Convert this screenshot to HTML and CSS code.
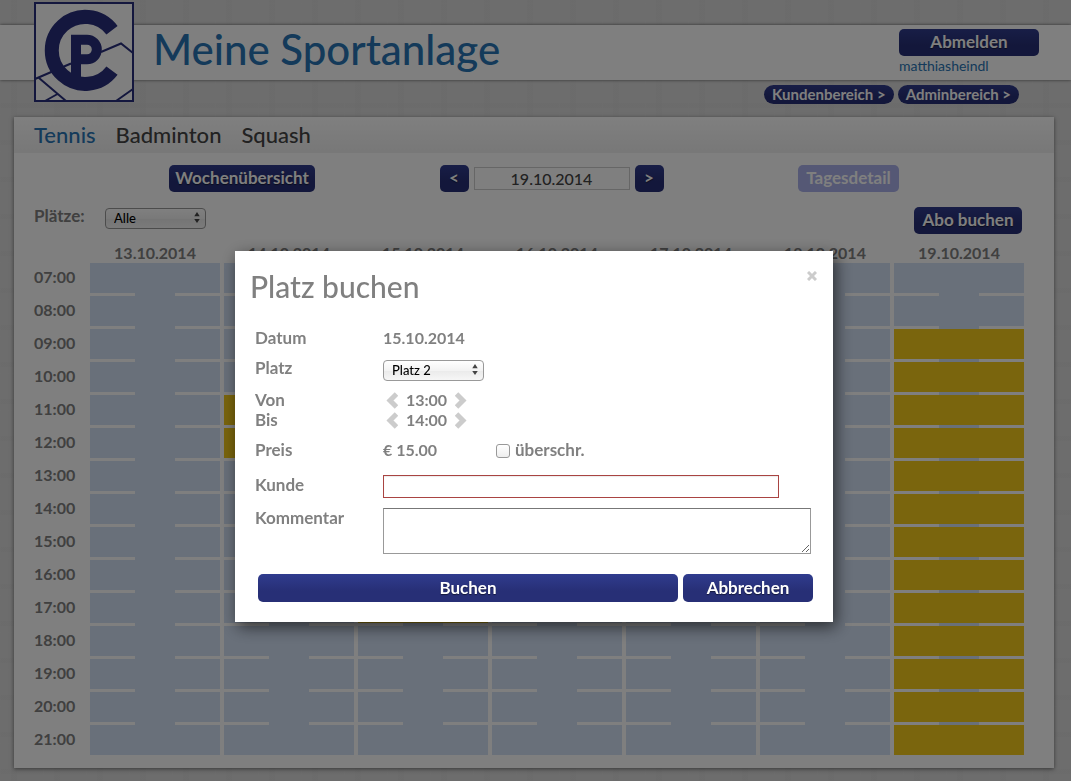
FILE: index.html
```html
<!DOCTYPE html>
<html lang="de">
<head>
<meta charset="utf-8">
<title>Meine Sportanlage</title>
<link rel="stylesheet" href="styles.css">
</head>
<body>
<header class="topbar">
  <svg class="logo" viewBox="0 0 100 100" role="img" aria-label="CP">
    <rect class="logo-frame" x="1" y="1" width="98" height="98"/>
    <path class="logo-line" d="M1 77L37 61.500M67 50L87 41.500L99 51M5 76L32 99M11 99L23.500 92M82 99L99 87"/>
    <path class="logo-ring" d="M78 28.200A33.500 33.500 0 1 0 78 68.600"/>
    <path class="logo-mark" d="M42 78V37.700H53A9.800 9.800 0 0 1 53 57.300H42"/>
  </svg>
  <h1 class="title">Meine Sportanlage</h1>
  <div class="user">
    <button class="btn" type="button">Abmelden</button>
    <a class="user-link" href="#">matthiasheindl</a>
  </div>
</header>
<nav class="areas">
  <a class="pill" href="#">Kundenbereich &gt;</a>
  <a class="pill" href="#">Adminbereich &gt;</a>
</nav>
<main class="panel">
  <nav class="tabs">
    <a class="tab active" href="#">Tennis</a>
    <a class="tab" href="#">Badminton</a>
    <a class="tab" href="#">Squash</a>
  </nav>
  <div class="toolbar">
    <button class="btn week" type="button">Wochenübersicht</button>
    <div class="datepick">
      <button class="btn step" type="button">&lt;</button>
      <input class="date" type="text" value="19.10.2014" aria-label="Datum">
      <button class="btn step" type="button">&gt;</button>
    </div>
    <button class="btn day" type="button" disabled>Tagesdetail</button>
  </div>
  <div class="filter">
    <label class="filter-label" for="courts">Plätze:</label>
    <span class="select"><select id="courts"><option>Alle</option></select><svg class="arrows" viewBox="0 0 6 12"><path d="M3 0L6 4.500H0ZM3 12L0 7.500H6Z"/></svg></span>
    <button class="btn abo" type="button">Abo buchen</button>
  </div>
  <table class="week-table">
    <thead>
      <tr><td class="corner"></td><th>13.10.2014</th><th>14.10.2014</th><th>15.10.2014</th><th>16.10.2014</th><th>17.10.2014</th><th>18.10.2014</th><th>19.10.2014</th></tr>
    </thead>
    <tbody>
      <tr><th>07:00</th><td></td><td></td><td></td><td></td><td></td><td></td><td></td></tr>
      <tr><th>08:00</th><td></td><td></td><td></td><td></td><td></td><td></td><td></td></tr>
      <tr><th>09:00</th><td></td><td></td><td></td><td></td><td></td><td></td><td class="busy"></td></tr>
      <tr><th>10:00</th><td></td><td></td><td></td><td></td><td></td><td></td><td class="busy"></td></tr>
      <tr><th>11:00</th><td></td><td class="busy"></td><td></td><td></td><td></td><td></td><td class="busy"></td></tr>
      <tr><th>12:00</th><td></td><td class="busy"></td><td></td><td></td><td></td><td></td><td class="busy"></td></tr>
      <tr><th>13:00</th><td></td><td></td><td></td><td></td><td></td><td></td><td class="busy"></td></tr>
      <tr><th>14:00</th><td></td><td></td><td></td><td></td><td></td><td></td><td class="busy"></td></tr>
      <tr><th>15:00</th><td></td><td></td><td></td><td></td><td></td><td></td><td class="busy"></td></tr>
      <tr><th>16:00</th><td></td><td></td><td></td><td></td><td></td><td></td><td class="busy"></td></tr>
      <tr><th>17:00</th><td></td><td></td><td class="busy"></td><td></td><td></td><td></td><td class="busy"></td></tr>
      <tr><th>18:00</th><td></td><td></td><td></td><td></td><td></td><td></td><td class="busy"></td></tr>
      <tr><th>19:00</th><td></td><td></td><td></td><td></td><td></td><td></td><td class="busy"></td></tr>
      <tr><th>20:00</th><td></td><td></td><td></td><td></td><td></td><td></td><td class="busy"></td></tr>
      <tr><th>21:00</th><td></td><td></td><td></td><td></td><td></td><td></td><td class="busy"></td></tr>
    </tbody>
  </table>
</main>
<div class="overlay">
  <form class="dialog" role="dialog" aria-labelledby="dialog-title">
    <div class="dialog-head">
      <h2 class="dialog-title" id="dialog-title">Platz buchen</h2>
      <button class="close" type="button" aria-label="Schließen"><svg viewBox="0 0 10 10"><path d="M1 1L9 9M9 1L1 9"/></svg></button>
    </div>
    <div class="row"><span class="label">Datum</span><span>15.10.2014</span></div>
    <div class="row"><label class="label" for="court">Platz</label><span class="select light"><select id="court"><option>Platz 2</option></select><svg class="arrows" viewBox="0 0 6 12"><path d="M3 0L6 4.500H0ZM3 12L0 7.500H6Z"/></svg></span></div>
    <div class="row"><span class="label">Von</span><span class="stepper"><button class="chev" type="button" aria-label="früher"><svg viewBox="0 0 12 17"><path d="M10.500 2L4 8.500L10.500 15"/></svg></button><span class="time">13:00</span><button class="chev" type="button" aria-label="später"><svg viewBox="0 0 12 17"><path d="M1.500 2L8 8.500L1.500 15"/></svg></button></span></div>
    <div class="row tight"><span class="label">Bis</span><span class="stepper"><button class="chev" type="button" aria-label="früher"><svg viewBox="0 0 12 17"><path d="M10.500 2L4 8.500L10.500 15"/></svg></button><span class="time">14:00</span><button class="chev" type="button" aria-label="später"><svg viewBox="0 0 12 17"><path d="M1.500 2L8 8.500L1.500 15"/></svg></button></span></div>
    <div class="row"><span class="label">Preis</span><span class="price">€ 15.00</span><input class="check" type="checkbox" id="override"><label class="check-label" for="override">überschr.</label></div>
    <div class="row customer"><label class="label" for="customer">Kunde</label><input class="field" type="text" id="customer"></div>
    <div class="row"><label class="label" for="comment">Kommentar</label><textarea class="area" id="comment"></textarea></div>
    <div class="actions">
      <button class="btn book" type="button">Buchen</button>
      <button class="btn cancel" type="button">Abbrechen</button>
    </div>
  </form>
</div>
</body>
</html>
```
FILE: styles.css
```css
* { box-sizing: border-box; }

body {
  margin: 0;
  padding-top: 25px;
  min-height: 100vh;
  font: 16px/20px Lato, "Open Sans", sans-serif;
  color: #555;
  background:
    repeating-linear-gradient(90deg, rgba(255,255,255,.04) 0 1px, transparent 1px 11px, rgba(0,0,0,.01) 11px 17px, transparent 17px 43px),
    repeating-linear-gradient(0deg, rgba(255,255,255,.04) 0 1px, transparent 1px 7px, rgba(0,0,0,.01) 7px 12px, transparent 12px 37px),
    #dadada;
}

a { text-decoration: none; }
button, input, select, textarea { font: inherit; margin: 0; }

.topbar {
  display: flex;
  align-items: flex-start;
  height: 55px;
  padding: 0 32px 0 34px;
  background: #fff;
  box-shadow: 0 0 3px rgba(0,0,0,.6);
}

.logo { flex: none; width: 100px; height: 100px; margin: -23px 19px -22px 0; fill: none; stroke: #292f7c; }
.logo-frame { fill: #fff; stroke-width: 2; }
.logo-line { stroke-width: 2; }
.logo-ring { stroke-width: 14; }
.logo-mark { stroke-width: 10; }

.title { margin: 0; font-size: 42px; line-height: 48px; font-weight: 500; color: #2874b4; }

.user { width: 140px; margin-left: auto; padding-top: 4px; display: flex; flex-direction: column; }
.user-link { font-size: 14px; line-height: 20px; color: #2874b4; }

.btn {
  height: 27px;
  padding: 0 0 1px;
  border: 0;
  border-radius: 5px;
  font-size: 17px;
  font-weight: 700;
  color: #fff;
  text-shadow: 0 1px 1px rgba(0,0,0,.5);
  background: linear-gradient(#303c8e, #272f76 60%);
}

.areas { display: flex; justify-content: flex-end; gap: 4px; padding: 5px 52px 0 0; }
.pill {
  padding: 0 8px;
  border-radius: 10px;
  font-size: 15px;
  line-height: 19px;
  font-weight: 700;
  color: #fff;
  background: linear-gradient(#303c8e, #272f76 60%);
}

.panel { margin: 13px 17px 13px 14px; padding-bottom: 13px; background: #fff; box-shadow: 0 1px 4px rgba(0,0,0,.5); }

.tabs { display: flex; gap: 20px; height: 36px; padding-left: 20px; background: linear-gradient(#fff, #f0f0f0); }
.tab { font-size: 22px; line-height: 36px; font-weight: 500; color: #444; }
.tab.active { color: #2874b4; }

.toolbar { display: flex; justify-content: space-between; align-items: center; padding: 12px 155px 0; }
.week { width: 146px; }
.day { width: 101px; background: #aab0ea; text-shadow: none; }
.datepick { display: flex; align-items: center; gap: 5px; margin-right: 10px; }
.step { width: 29px; }
.date { width: 156px; height: 23px; padding: 0; border: 1px solid #ccc; text-align: center; font-weight: 500; color: #444; background: #fff; }

.filter { display: flex; align-items: flex-start; padding: 15px 32px 9px 20px; }
.filter-label { width: 71px; font-size: 17px; line-height: 18px; font-weight: 700; color: #808080; }
.abo { width: 108px; margin-left: auto; }

.select { position: relative; display: block; width: 101px; height: 21px; }
.select select {
  appearance: none;
  width: 100%;
  height: 100%;
  padding: 0 8px;
  border: 1px solid #999;
  border-radius: 4px;
  font-size: 13px;
  line-height: 18px;
  font-weight: 500;
  color: #000;
  background: linear-gradient(#fff, #f3f3f3 50%, #eaeaea 51%, #f6f6f6);
}
.arrows { position: absolute; right: 6px; top: 5px; width: 6px; height: 11px; fill: #444; pointer-events: none; }

.week-table { width: calc(100% - 42px); margin-left: 16px; table-layout: fixed; border-spacing: 4px 0; }
.week-table th, .week-table td { padding: 0; }
.week-table thead th { height: 20px; font-weight: 700; color: #808080; }
.corner { width: 52px; }
.week-table tbody th { text-align: left; vertical-align: top; line-height: 28px; font-weight: 700; color: #808080; }
.week-table tbody td {
  height: 33px;
  background:
    linear-gradient(#d2e0f5, #d2e0f5) top / 100% 30px no-repeat,
    linear-gradient(#d2e0f5, #d2e0f5) top / 40px 100% no-repeat;
}
.week-table tbody .busy {
  background:
    linear-gradient(#f4ca1a, #f4ca1a) top / 100% 30px no-repeat,
    linear-gradient(#d2e0f5, #d2e0f5) top / 40px 100% no-repeat;
}
.week-table tbody tr:last-child td { height: 30px; }

.overlay {
  position: fixed;
  inset: 0;
  display: flex;
  justify-content: center;
  align-items: flex-start;
  padding: 251px 3px 0 0;
  background: rgba(0,0,0,.5);
}
.dialog {
  width: 598px;
  padding: 20px;
  color: #808080;
  font-weight: 700;
  background: #fff;
  box-shadow: 3px 5px 15px rgba(0,0,0,.6);
}
.dialog-head { display: flex; justify-content: space-between; align-items: flex-start; margin: 0 -4px 26px -5px; }
.dialog-title { margin: 0; font-size: 30px; line-height: 31px; font-weight: 500; }
.close { width: 10px; height: 10px; padding: 0; border: 0; background: none; }
.close svg { display: block; fill: none; stroke: #ccc; stroke-width: 3; }

.row { display: flex; align-items: flex-start; margin-bottom: 10px; }
.row:has(+ .tight) { margin-bottom: 0; }
.row:has(+ .customer) { margin-bottom: 15px; }
.label { flex: none; width: 128px; font-size: 17px; }
.check-label { font-size: 17px; }
.light { margin-top: 1px; }
.stepper { display: flex; align-items: center; gap: 7px; padding-left: 3px; }
.chev { width: 12px; height: 17px; padding: 0; border: 0; background: none; }
.chev svg { display: block; width: 12px; height: 17px; fill: none; stroke: #ccc; stroke-width: 5; }
.time { width: 43px; text-align: center; }
.price { width: 113px; }
.check { appearance: none; width: 14px; height: 14px; margin: 4px 5px 0 0; border: 1px solid #999; border-radius: 3px; background: linear-gradient(#fff, #eee); }
.field { width: 396px; height: 23px; padding: 0 4px; border: 1px solid #a94442; box-shadow: inset 0 1px 1px rgba(0,0,0,.08); }
.area { width: 428px; height: 46px; padding: 2px 4px; border: 1px solid #999; border-top-color: #777; resize: both; }
.actions { display: flex; gap: 5px; margin: 20px 0 0 3px; }
.book, .cancel { height: 28px; }
.book { width: 420px; }
.cancel { width: 130px; }
```
